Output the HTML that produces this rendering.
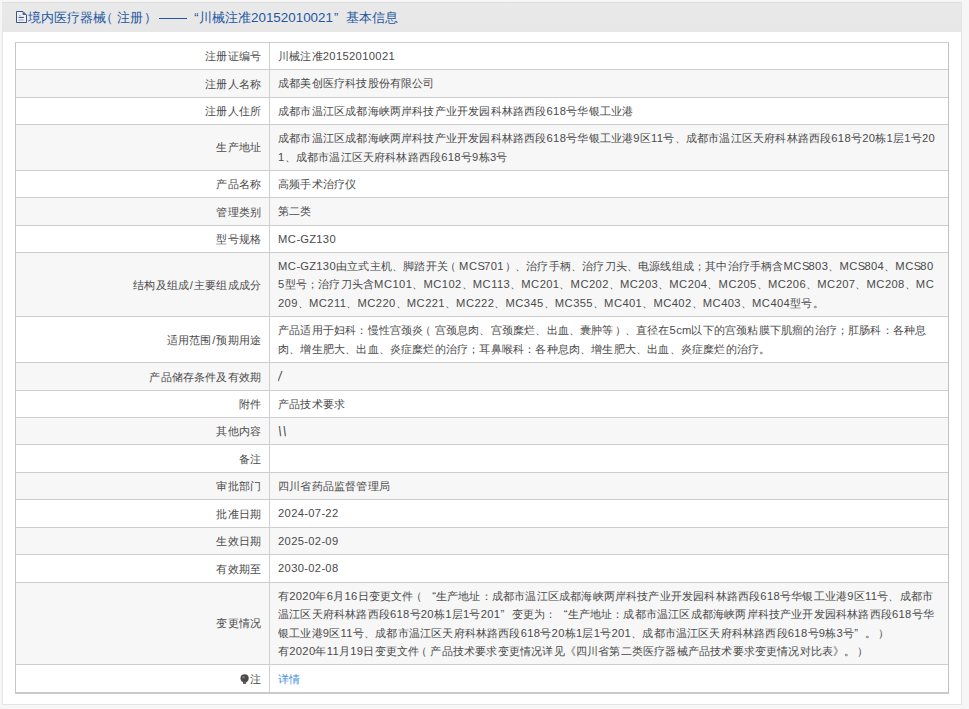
<!DOCTYPE html><html><head><meta charset="utf-8"><style>html,body{margin:0;padding:0}
body{width:969px;height:709px;background:#f6f6f6;position:relative;overflow:hidden;font-family:"Liberation Sans",sans-serif;color:#4a4a4a}
#panel{position:absolute;left:2px;top:2px;width:960px;height:703px;background:#fff;border:1px solid #e4e4e4;border-top:0;box-sizing:border-box}
#hdr{position:absolute;left:-1px;top:0;width:959px;height:29.5px;background:linear-gradient(#e9e9e9,#e7e7e7);border-top:1px solid #dedede;color:#2456a0;font-size:13px;line-height:30px;padding-left:26px;box-sizing:border-box;white-space:nowrap;overflow:hidden}
.ico{position:absolute;left:14px;top:8px}
#tbl{position:absolute;left:15px;top:42px;width:934px;height:652px;border-left:1px solid #c6c6c6;border-right:1px solid #c2c2c2;border-bottom:2px solid #c9c9c9;box-sizing:border-box}
.row{position:absolute;left:0;width:932px;border-top:1px solid #cdcdcd;box-sizing:border-box;font-size:11.2px;letter-spacing:0.2px}
.odd{background:#fff}
.even{background:#f7f7f7}
.lab{position:absolute;left:0;top:0;bottom:0;width:254px;text-align:right;padding-right:8px;box-sizing:border-box;border-right:1px solid #cfcfcf;white-space:nowrap;overflow:hidden}
.val{position:absolute;left:254px;right:0;top:0;bottom:0;overflow:hidden;padding-left:8px;display:flex;flex-direction:column;justify-content:center}
.ln{height:18.3px;line-height:18.3px;white-space:nowrap;overflow:hidden}
.lnk{color:#3f8ee2;position:relative;top:1px}
.bulb{display:inline-block;width:11px;vertical-align:-2px;margin-left:-1px}
i{font-style:normal}
.lq{display:inline-block;width:11.2px;text-align:right;letter-spacing:0}
.rq{display:inline-block;width:11.2px;text-align:left;letter-spacing:0}
#hdr .lq,#hdr .rq{width:13px;box-sizing:border-box}#hdr .lq{padding-right:1.5px;margin-right:-1px}#hdr .rq{padding-left:1px}
.dash{display:inline-block;width:28px;margin-left:1px;height:0;border-top:1px solid #2456a0;vertical-align:3px}
.hd{font-weight:normal;font-size:13.4px;letter-spacing:0}
b{font-weight:normal}
.mc{letter-spacing:0.51px}
.n{letter-spacing:0.35px}
.s{letter-spacing:-0.87px}
.sl{padding:0 0.8px}
.lp{position:relative;left:-3px}
.rp{position:relative;left:1.5px}
.sym{font-size:13px;letter-spacing:1.2px;display:inline-block;position:relative;top:1px;transform:scaleY(1.05) skewX(-8deg)}
s{display:inline-block;width:11.2px;text-decoration:none;letter-spacing:0}
#hdr s{width:13px}
#hdr .lp{left:-5.7px;margin-right:-2.5px}
#hdr .rp{left:1.9px;margin-right:2.5px}
</style></head><body><div id="panel"><div id="hdr"><svg class="ico" width="11" height="12" viewBox="0 0 11 12"><path d="M0.5 0.5 H7 L10.5 4 V11.5 H0.5 Z" fill="#eef0fb" stroke="#3a5583" stroke-width="1"/><path d="M6.6 0.6 V4 H10.4 Z" fill="#4a6594"/><path d="M2.6 6.4 H7.8" stroke="#33456b" stroke-width="1"/><path d="M2.6 9 H7.6" stroke="#8a9cc4" stroke-width="1"/><path d="M3 4.3 H4.6" stroke="#8f86c0" stroke-width="0.8"/></svg><s>境</s><s>内</s><s>医</s><s>疗</s><s>器</s><s>械</s><s class="lp">（</s><s>注</s><s>册</s><s class="rp">）</s><i class="dash"></i><i class="lq">“</i><s>川</s><s>械</s><s>注</s><s>准</s><b class="hd">20152010021</b><i class="rq">”</i><s>基</s><s>本</s><s>信</s><s>息</s></div></div><div id="tbl"><div class="row odd" style="top:0px;height:27px"><div class="lab" style="line-height:27px"><s>注</s><s>册</s><s>证</s><s>编</s><s>号</s></div><div class="val"><div class="ln"><s>川</s><s>械</s><s>注</s><s>准</s><b class="n">20152010021</b></div></div></div><div class="row even" style="top:27px;height:28px"><div class="lab" style="line-height:28px"><s>注</s><s>册</s><s>人</s><s>名</s><s>称</s></div><div class="val"><div class="ln"><s>成</s><s>都</s><s>美</s><s>创</s><s>医</s><s>疗</s><s>科</s><s>技</s><s>股</s><s>份</s><s>有</s><s>限</s><s>公</s><s>司</s></div></div></div><div class="row odd" style="top:55px;height:27px"><div class="lab" style="line-height:27px"><s>注</s><s>册</s><s>人</s><s>住</s><s>所</s></div><div class="val"><div class="ln"><s>成</s><s>都</s><s>市</s><s>温</s><s>江</s><s>区</s><s>成</s><s>都</s><s>海</s><s>峡</s><s>两</s><s>岸</s><s>科</s><s>技</s><s>产</s><s>业</s><s>开</s><s>发</s><s>园</s><s>科</s><s>林</s><s>路</s><s>西</s><s>段</s><b class="n">618</b><s>号</s><s>华</s><s>银</s><s>工</s><s>业</s><s>港</s></div></div></div><div class="row even" style="top:82px;height:46px"><div class="lab" style="line-height:44px"><s>生</s><s>产</s><s>地</s><s>址</s></div><div class="val"><div class="ln"><s>成</s><s>都</s><s>市</s><s>温</s><s>江</s><s>区</s><s>成</s><s>都</s><s>海</s><s>峡</s><s>两</s><s>岸</s><s>科</s><s>技</s><s>产</s><s>业</s><s>开</s><s>发</s><s>园</s><s>科</s><s>林</s><s>路</s><s>西</s><s>段</s><b class="n">618</b><s>号</s><s>华</s><s>银</s><s>工</s><s>业</s><s>港</s><b class="n">9</b><s>区</s><b class="n">11</b><s>号</s><s>、</s><s>成</s><s>都</s><s>市</s><s>温</s><s>江</s><s>区</s><s>天</s><s>府</s><s>科</s><s>林</s><s>路</s><s>西</s><s>段</s><b class="n">618</b><s>号</s><b class="n">20</b><s>栋</s><b class="n">1</b><s>层</s><b class="n">1</b><s>号</s><b class="n">20</b></div><div class="ln"><b class="n">1</b><s>、</s><s>成</s><s>都</s><s>市</s><s>温</s><s>江</s><s>区</s><s>天</s><s>府</s><s>科</s><s>林</s><s>路</s><s>西</s><s>段</s><b class="n">618</b><s>号</s><b class="n">9</b><s>栋</s><b class="n">3</b><s>号</s></div></div></div><div class="row odd" style="top:128px;height:27px"><div class="lab" style="line-height:27px"><s>产</s><s>品</s><s>名</s><s>称</s></div><div class="val"><div class="ln"><s>高</s><s>频</s><s>手</s><s>术</s><s>治</s><s>疗</s><s>仪</s></div></div></div><div class="row even" style="top:155px;height:28px"><div class="lab" style="line-height:28px"><s>管</s><s>理</s><s>类</s><s>别</s></div><div class="val"><div class="ln"><s>第</s><s>二</s><s>类</s></div></div></div><div class="row odd" style="top:183px;height:27px"><div class="lab" style="line-height:27px"><s>型</s><s>号</s><s>规</s><s>格</s></div><div class="val"><div class="ln"><b class="mc">MC</b>-GZ<b class="n">130</b></div></div></div><div class="row even" style="top:210px;height:64px"><div class="lab" style="line-height:64px"><s>结</s><s>构</s><s>及</s><s>组</s><s>成</s><b class="sl">/</b><s>主</s><s>要</s><s>组</s><s>成</s><s>成</s><s>分</s></div><div class="val"><div class="ln"><b class="mc">MC</b>-GZ<b class="n">130</b><s>由</s><s>立</s><s>式</s><s>主</s><s>机</s><s>、</s><s>脚</s><s>踏</s><s>开</s><s>关</s><s class="lp">（</s><b class="mc">MC</b><b class="s">S</b><b class="n">701</b><s class="rp">）</s><s>、</s><s>治</s><s>疗</s><s>手</s><s>柄</s><s>、</s><s>治</s><s>疗</s><s>刀</s><s>头</s><s>、</s><s>电</s><s>源</s><s>线</s><s>组</s><s>成</s><s>；</s><s>其</s><s>中</s><s>治</s><s>疗</s><s>手</s><s>柄</s><s>含</s><b class="mc">MC</b><b class="s">S</b><b class="n">803</b><s>、</s><b class="mc">MC</b><b class="s">S</b><b class="n">804</b><s>、</s><b class="mc">MC</b><b class="s">S</b><b class="n">80</b></div><div class="ln"><b class="n">5</b><s>型</s><s>号</s><s>；</s><s>治</s><s>疗</s><s>刀</s><s>头</s><s>含</s><b class="mc">MC</b><b class="n">101</b><s>、</s><b class="mc">MC</b><b class="n">102</b><s>、</s><b class="mc">MC</b><b class="n">113</b><s>、</s><b class="mc">MC</b><b class="n">201</b><s>、</s><b class="mc">MC</b><b class="n">202</b><s>、</s><b class="mc">MC</b><b class="n">203</b><s>、</s><b class="mc">MC</b><b class="n">204</b><s>、</s><b class="mc">MC</b><b class="n">205</b><s>、</s><b class="mc">MC</b><b class="n">206</b><s>、</s><b class="mc">MC</b><b class="n">207</b><s>、</s><b class="mc">MC</b><b class="n">208</b><s>、</s><b class="mc">MC</b></div><div class="ln"><b class="n">209</b><s>、</s><b class="mc">MC</b><b class="n">211</b><s>、</s><b class="mc">MC</b><b class="n">220</b><s>、</s><b class="mc">MC</b><b class="n">221</b><s>、</s><b class="mc">MC</b><b class="n">222</b><s>、</s><b class="mc">MC</b><b class="n">345</b><s>、</s><b class="mc">MC</b><b class="n">355</b><s>、</s><b class="mc">MC</b><b class="n">401</b><s>、</s><b class="mc">MC</b><b class="n">402</b><s>、</s><b class="mc">MC</b><b class="n">403</b><s>、</s><b class="mc">MC</b><b class="n">404</b><s>型</s><s>号</s><s>。</s></div></div></div><div class="row odd" style="top:274px;height:46px"><div class="lab" style="line-height:46px"><s>适</s><s>用</s><s>范</s><s>围</s><b class="sl">/</b><s>预</s><s>期</s><s>用</s><s>途</s></div><div class="val"><div class="ln"><s>产</s><s>品</s><s>适</s><s>用</s><s>于</s><s>妇</s><s>科</s><s>：</s><s>慢</s><s>性</s><s>宫</s><s>颈</s><s>炎</s><s class="lp">（</s><s>宫</s><s>颈</s><s>息</s><s>肉</s><s>、</s><s>宫</s><s>颈</s><s>糜</s><s>烂</s><s>、</s><s>出</s><s>血</s><s>、</s><s>囊</s><s>肿</s><s>等</s><s class="rp">）</s><s>、</s><s>直</s><s>径</s><s>在</s><b class="n">5</b>cm<s>以</s><s>下</s><s>的</s><s>宫</s><s>颈</s><s>粘</s><s>膜</s><s>下</s><s>肌</s><s>瘤</s><s>的</s><s>治</s><s>疗</s><s>；</s><s>肛</s><s>肠</s><s>科</s><s>：</s><s>各</s><s>种</s><s>息</s></div><div class="ln"><s>肉</s><s>、</s><s>增</s><s>生</s><s>肥</s><s>大</s><s>、</s><s>出</s><s>血</s><s>、</s><s>炎</s><s>症</s><s>糜</s><s>烂</s><s>的</s><s>治</s><s>疗</s><s>；</s><s>耳</s><s>鼻</s><s>喉</s><s>科</s><s>：</s><s>各</s><s>种</s><s>息</s><s>肉</s><s>、</s><s>增</s><s>生</s><s>肥</s><s>大</s><s>、</s><s>出</s><s>血</s><s>、</s><s>炎</s><s>症</s><s>糜</s><s>烂</s><s>的</s><s>治</s><s>疗</s><s>。</s></div></div></div><div class="row even" style="top:320px;height:28px"><div class="lab" style="line-height:28px"><s>产</s><s>品</s><s>储</s><s>存</s><s>条</s><s>件</s><s>及</s><s>有</s><s>效</s><s>期</s></div><div class="val"><div class="ln"><span class="sym">/</span></div></div></div><div class="row odd" style="top:348px;height:27px"><div class="lab" style="line-height:27px"><s>附</s><s>件</s></div><div class="val"><div class="ln"><s>产</s><s>品</s><s>技</s><s>术</s><s>要</s><s>求</s></div></div></div><div class="row even" style="top:375px;height:27px"><div class="lab" style="line-height:27px"><s>其</s><s>他</s><s>内</s><s>容</s></div><div class="val"><div class="ln"><span class="sym">\\</span></div></div></div><div class="row odd" style="top:402px;height:28px"><div class="lab" style="line-height:28px"><s>备</s><s>注</s></div><div class="val"><div class="ln">&nbsp;</div></div></div><div class="row even" style="top:430px;height:27px"><div class="lab" style="line-height:27px"><s>审</s><s>批</s><s>部</s><s>门</s></div><div class="val"><div class="ln"><s>四</s><s>川</s><s>省</s><s>药</s><s>品</s><s>监</s><s>督</s><s>管</s><s>理</s><s>局</s></div></div></div><div class="row odd" style="top:457px;height:28px"><div class="lab" style="line-height:28px"><s>批</s><s>准</s><s>日</s><s>期</s></div><div class="val"><div class="ln"><b class="n">2024</b>-<b class="n">07</b>-<b class="n">22</b></div></div></div><div class="row even" style="top:485px;height:27px"><div class="lab" style="line-height:27px"><s>生</s><s>效</s><s>日</s><s>期</s></div><div class="val"><div class="ln"><b class="n">2025</b>-<b class="n">02</b>-<b class="n">09</b></div></div></div><div class="row odd" style="top:512px;height:28px"><div class="lab" style="line-height:28px"><s>有</s><s>效</s><s>期</s><s>至</s></div><div class="val"><div class="ln"><b class="n">2030</b>-<b class="n">02</b>-<b class="n">08</b></div></div></div><div class="row even" style="top:540px;height:82px"><div class="lab" style="line-height:80px"><s>变</s><s>更</s><s>情</s><s>况</s></div><div class="val"><div class="ln"><s>有</s><b class="n">2020</b><s>年</s><b class="n">6</b><s>月</s><b class="n">16</b><s>日</s><s>变</s><s>更</s><s>文</s><s>件</s><s class="lp">（</s><i class="lq">“</i><s>生</s><s>产</s><s>地</s><s>址</s><s>：</s><s>成</s><s>都</s><s>市</s><s>温</s><s>江</s><s>区</s><s>成</s><s>都</s><s>海</s><s>峡</s><s>两</s><s>岸</s><s>科</s><s>技</s><s>产</s><s>业</s><s>开</s><s>发</s><s>园</s><s>科</s><s>林</s><s>路</s><s>西</s><s>段</s><b class="n">618</b><s>号</s><s>华</s><s>银</s><s>工</s><s>业</s><s>港</s><b class="n">9</b><s>区</s><b class="n">11</b><s>号</s><s>、</s><s>成</s><s>都</s><s>市</s></div><div class="ln"><s>温</s><s>江</s><s>区</s><s>天</s><s>府</s><s>科</s><s>林</s><s>路</s><s>西</s><s>段</s><b class="n">618</b><s>号</s><b class="n">20</b><s>栋</s><b class="n">1</b><s>层</s><b class="n">1</b><s>号</s><b class="n">201</b><i class="rq">”</i><s>变</s><s>更</s><s>为</s><s>：</s><i class="lq">“</i><s>生</s><s>产</s><s>地</s><s>址</s><s>：</s><s>成</s><s>都</s><s>市</s><s>温</s><s>江</s><s>区</s><s>成</s><s>都</s><s>海</s><s>峡</s><s>两</s><s>岸</s><s>科</s><s>技</s><s>产</s><s>业</s><s>开</s><s>发</s><s>园</s><s>科</s><s>林</s><s>路</s><s>西</s><s>段</s><b class="n">618</b><s>号</s><s>华</s></div><div class="ln"><s>银</s><s>工</s><s>业</s><s>港</s><b class="n">9</b><s>区</s><b class="n">11</b><s>号</s><s>、</s><s>成</s><s>都</s><s>市</s><s>温</s><s>江</s><s>区</s><s>天</s><s>府</s><s>科</s><s>林</s><s>路</s><s>西</s><s>段</s><b class="n">618</b><s>号</s><b class="n">20</b><s>栋</s><b class="n">1</b><s>层</s><b class="n">1</b><s>号</s><b class="n">201</b><s>、</s><s>成</s><s>都</s><s>市</s><s>温</s><s>江</s><s>区</s><s>天</s><s>府</s><s>科</s><s>林</s><s>路</s><s>西</s><s>段</s><b class="n">618</b><s>号</s><b class="n">9</b><s>栋</s><b class="n">3</b><s>号</s><i class="rq">”</i><s>。</s><s class="rp">）</s></div><div class="ln"><s>有</s><b class="n">2020</b><s>年</s><b class="n">11</b><s>月</s><b class="n">19</b><s>日</s><s>变</s><s>更</s><s>文</s><s>件</s><s class="lp">（</s><s>产</s><s>品</s><s>技</s><s>术</s><s>要</s><s>求</s><s>变</s><s>更</s><s>情</s><s>况</s><s>详</s><s>见</s><s>《</s><s>四</s><s>川</s><s>省</s><s>第</s><s>二</s><s>类</s><s>医</s><s>疗</s><s>器</s><s>械</s><s>产</s><s>品</s><s>技</s><s>术</s><s>要</s><s>求</s><s>变</s><s>更</s><s>情</s><s>况</s><s>对</s><s>比</s><s>表</s><s>》</s><s>。</s><s class="rp">）</s></div></div></div><div class="row odd" style="top:622px;height:28px"><div class="lab" style="line-height:28px"><span class="bulb"><svg width="10" height="11" viewBox="0 0 10 11"><circle cx="4.6" cy="4.3" r="4.1" fill="#4a4a4a"/><circle cx="3.4" cy="3.2" r="1.3" fill="#7a7a7a"/><rect x="3" y="7.4" width="3.2" height="2.6" rx="0.8" fill="#5a5a5a"/></svg></span><s>注</s></div><div class="val"><div class="ln"><span class="lnk"><s>详</s><s>情</s></span></div></div></div></div></body></html>
